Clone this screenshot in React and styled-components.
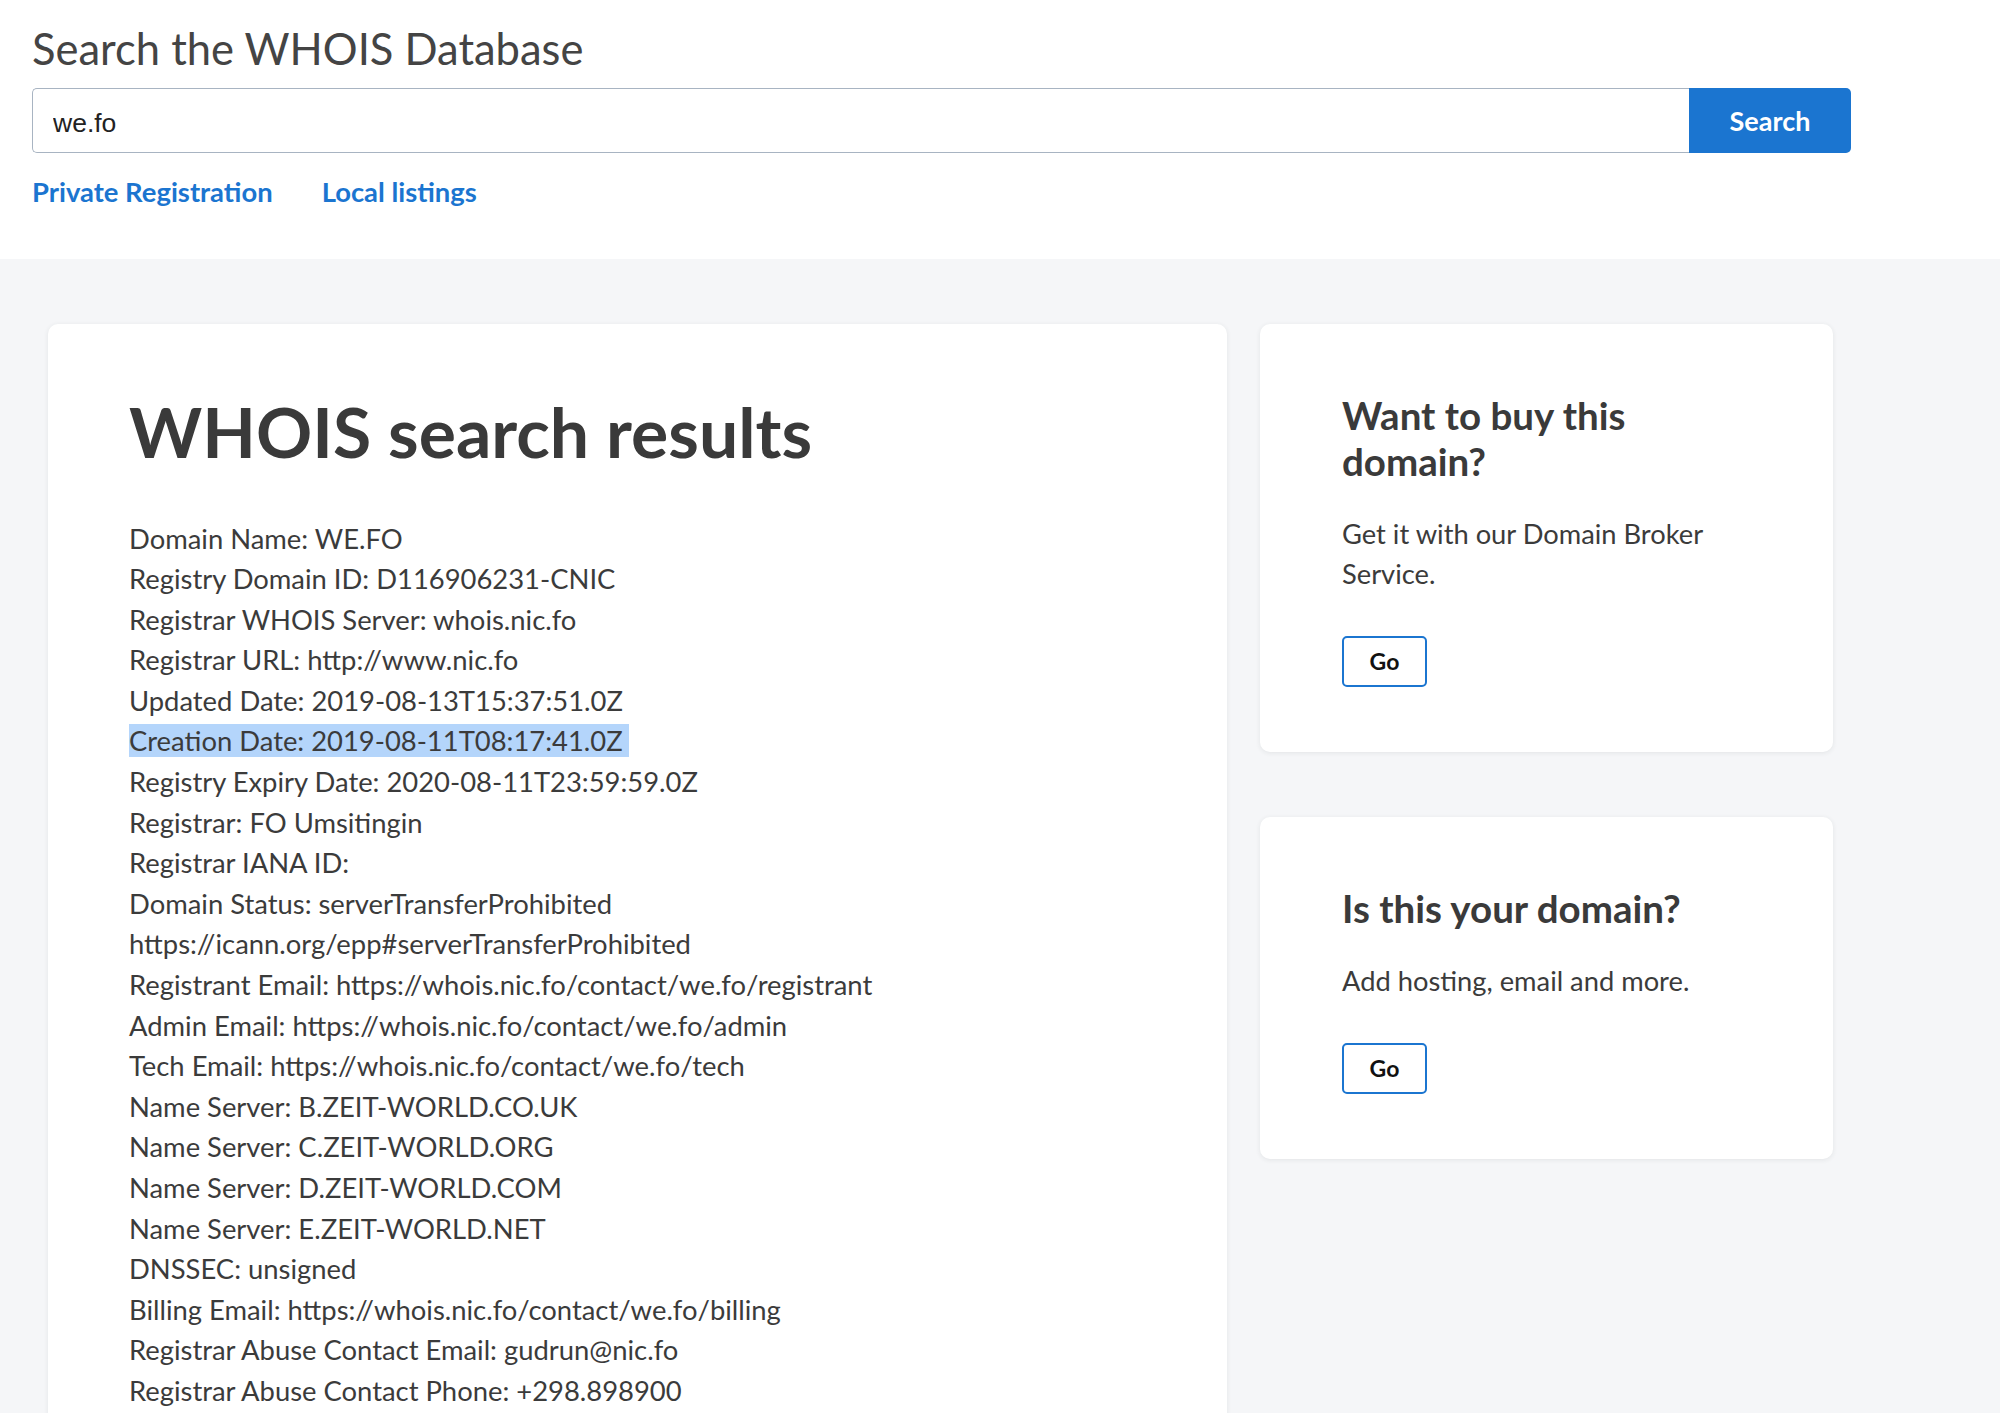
import React from "react";
import styled, { createGlobalStyle } from "styled-components";

const GlobalStyle = createGlobalStyle`
  html, body {
    margin: 0;
    padding: 0;
    background: #f5f6f8;
  }
  body {
    font-family: "Lato", "Liberation Sans", sans-serif;
    color: #3b3b3b;
  }
`

const Header = styled.header`
  background: #fff;
  padding: 22px 32px 50px;
`
const Title = styled.h1`
  margin: 0;
  font-size: 43.5px;
  line-height: 52px;
  font-weight: 400;
  color: #444;
`
const SearchForm = styled.form`
  display: flex;
  max-width: 1819px;
  margin-top: 14px;
`
const SearchInput = styled.input`
  flex: 1;
  height: 65px;
  box-sizing: border-box;
  border: 1.5px solid #a8b4c2;
  border-right: none;
  border-radius: 5px 0 0 5px;
  padding: 5px 20px 0;
  font-family: "Liberation Sans", Arial, sans-serif;
  font-size: 26.5px;
  color: #222;
  outline: none;
`
const SearchButton = styled.button`
  width: 162px;
  height: 65px;
  border: none;
  border-radius: 0 5px 5px 0;
  background: #1b75d0;
  color: #fff;
  font-family: "Lato", sans-serif;
  font-size: 27px;
  font-weight: 700;
  cursor: pointer;
`
const Links = styled.nav`
  display: flex;
  gap: 49px;
  margin-top: 21.5px;
`
const NavLink = styled.a`
  color: #1b75d0;
  font-size: 27.4px;
  line-height: 34px;
  font-weight: 700;
  text-decoration: none;
`

const Content = styled.main`
  display: grid;
  grid-template-columns: 1179px 573px;
  column-gap: 33px;
  align-items: start;
  padding: 65px 0 0 48px;
`
const Card = styled.section`
  background: #fff;
  border-radius: 10px;
  box-shadow: 0 1px 5px rgba(40, 50, 60, 0.09);
`
const ResultsCard = styled(Card)`
  padding: 65.5px 81px 60px;
`
const ResultsTitle = styled.h2`
  margin: 0;
  font-size: 69.7px;
  line-height: 84px;
  font-weight: 700;
  color: #3a3a3a;
`
const Record = styled.div`
  margin-top: 45.5px;
  font-size: 27.4px;
  line-height: 40.6px;
  color: #3b3b3b;
`
const RecordLine = styled.div`
  span {
    background: ${p => (p.$selected ? "#b4d5fb" : "transparent")};
    padding-right: ${p => (p.$selected ? "6px" : "0")};
  }
`

const Side = styled.aside`
  display: flex;
  flex-direction: column;
  gap: 65px;
`
const OfferCard = styled(Card)`
  padding: 68px 82px 65px;
`
const OfferTitle = styled.h3`
  margin: 0;
  font-size: 38.5px;
  line-height: 46px;
  font-weight: 700;
  color: #3a3a3a;
`
const OfferText = styled.p`
  margin: 30px 0 0;
  font-size: 27.3px;
  line-height: 40px;
`
const GoButton = styled.button`
  display: block;
  margin-top: 42px;
  width: 85px;
  height: 51px;
  box-sizing: border-box;
  background: #fff;
  border: 2px solid #1b75d0;
  border-radius: 5px;
  font-family: "Lato", sans-serif;
  font-size: 23px;
  font-weight: 700;
  color: #111;
  cursor: pointer;
`

const record = [
  "Domain Name: WE.FO",
  "Registry Domain ID: D116906231-CNIC",
  "Registrar WHOIS Server: whois.nic.fo",
  "Registrar URL: http://www.nic.fo",
  "Updated Date: 2019-08-13T15:37:51.0Z",
  "Creation Date: 2019-08-11T08:17:41.0Z",
  "Registry Expiry Date: 2020-08-11T23:59:59.0Z",
  "Registrar: FO Umsitingin",
  "Registrar IANA ID:",
  "Domain Status: serverTransferProhibited",
  "https://icann.org/epp#serverTransferProhibited",
  "Registrant Email: https://whois.nic.fo/contact/we.fo/registrant",
  "Admin Email: https://whois.nic.fo/contact/we.fo/admin",
  "Tech Email: https://whois.nic.fo/contact/we.fo/tech",
  "Name Server: B.ZEIT-WORLD.CO.UK",
  "Name Server: C.ZEIT-WORLD.ORG",
  "Name Server: D.ZEIT-WORLD.COM",
  "Name Server: E.ZEIT-WORLD.NET",
  "DNSSEC: unsigned",
  "Billing Email: https://whois.nic.fo/contact/we.fo/billing",
  "Registrar Abuse Contact Email: gudrun@nic.fo",
  "Registrar Abuse Contact Phone: +298.898900",
]

const offers = [
  { title: "Want to buy this domain?", text: "Get it with our Domain Broker Service." },
  { title: "Is this your domain?", text: "Add hosting, email and more." },
]

export default function App() {
  return (
    <>
      <GlobalStyle />
      <Header>
        <Title>Search the WHOIS Database</Title>
        <SearchForm onSubmit={e => e.preventDefault()}>
          <SearchInput defaultValue="we.fo" />
          <SearchButton type="submit">Search</SearchButton>
        </SearchForm>
        <Links>
          <NavLink href="#">Private Registration</NavLink>
          <NavLink href="#">Local listings</NavLink>
        </Links>
      </Header>
      <Content>
        <ResultsCard>
          <ResultsTitle>WHOIS search results</ResultsTitle>
          <Record>
            {record.map(line => (
              <RecordLine key={line} $selected={line.startsWith("Creation")}>
                <span>{line}</span>
              </RecordLine>
            ))}
          </Record>
        </ResultsCard>
        <Side>
          {offers.map(o => (
            <OfferCard key={o.title}>
              <OfferTitle>{o.title}</OfferTitle>
              <OfferText>{o.text}</OfferText>
              <GoButton>Go</GoButton>
            </OfferCard>
          ))}
        </Side>
      </Content>
    </>
  )
}
